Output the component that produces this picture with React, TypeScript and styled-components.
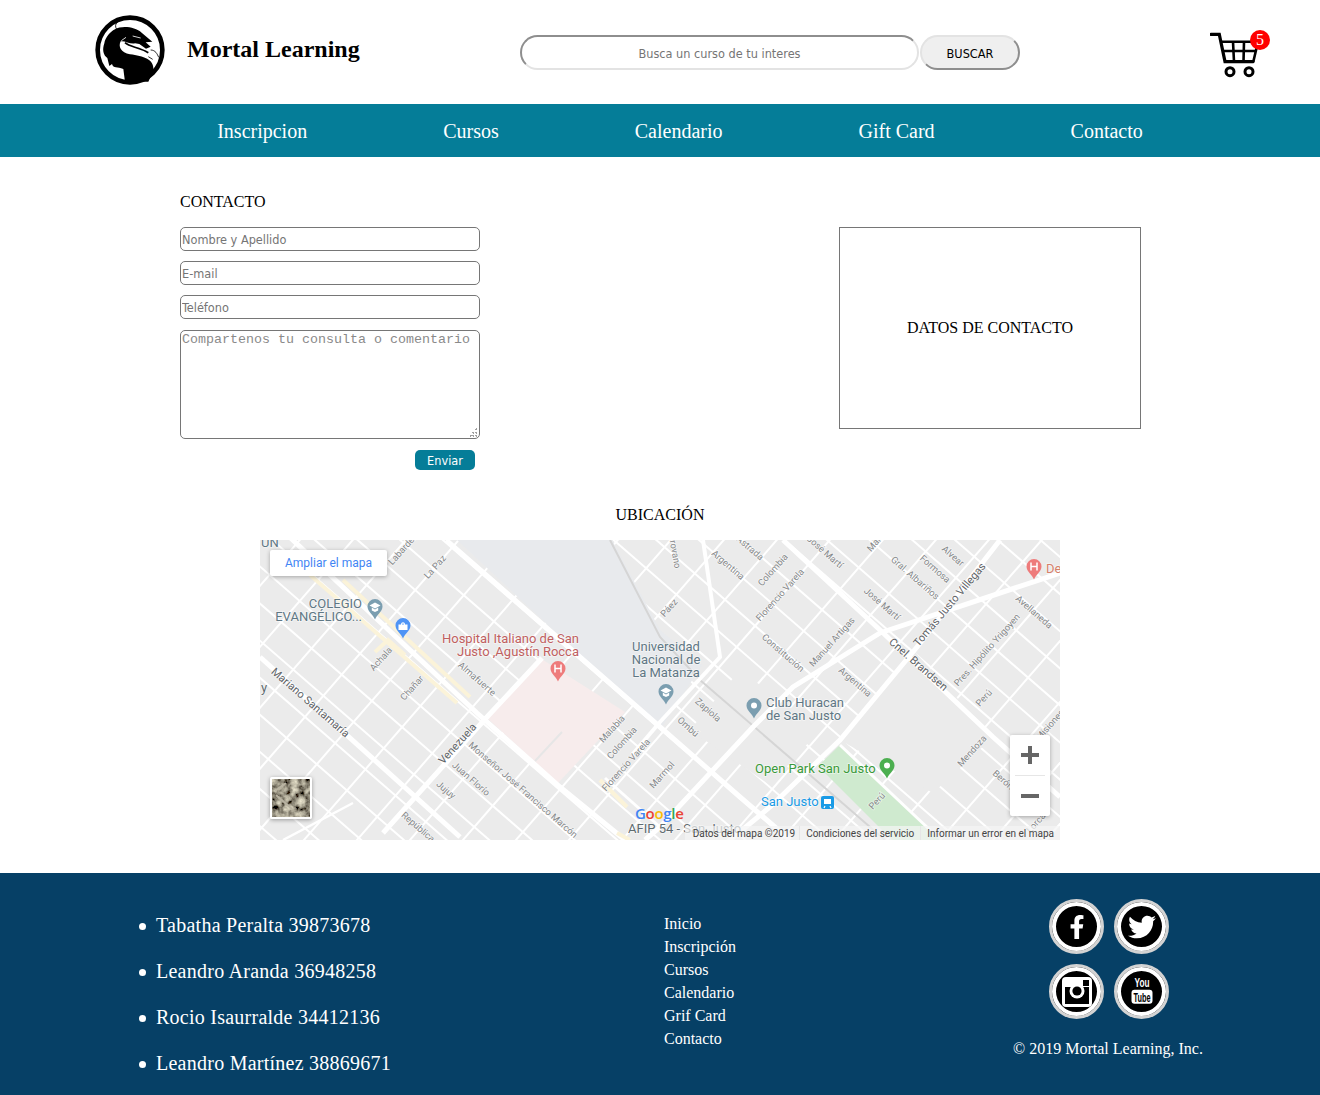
import React from "react";
import styled, { createGlobalStyle } from "styled-components";
import { FaFacebookF, FaTwitter } from "react-icons/fa";

const GlobalStyle = createGlobalStyle`
  html, body {
    margin: 0;
    padding: 0;
    background: #fff;
    font-family: "Liberation Serif", "Times New Roman", serif;
    color: #000;
  }
`;

const Header = styled.header`
  display: grid;
  grid-template-columns: 425px 500px 1fr;
  align-items: center;
  height: 104px;
  padding-left: 95px;
  box-sizing: border-box;
`;

const Brand = styled.div`
  display: flex;
  align-items: center;
  gap: 22px;
  padding-bottom: 4px;
`;

const BrandName = styled.h1`
  margin: 0;
  font-size: 24px;
  font-weight: bold;
  padding-bottom: 2px;
`;

const SearchForm = styled.form`
  display: flex;
  align-items: center;
  gap: 1px;
  margin-top: 1px;
`;

const SearchInput = styled.input`
  width: 399px;
  height: 35px;
  box-sizing: border-box;
  padding: 2px 1px 0;
  border: 2px solid #e3e3e3;
  border-color: #8e8e8e #e3e3e3 #e3e3e3 #8e8e8e;
  border-radius: 20px;
  background: #fff;
  text-align: center;
  outline: none;
  font-family: "DejaVu Sans", Tahoma, sans-serif;
  font-stretch: condensed;
  font-size: 12.6px;
  &::placeholder {
    color: #757575;
  }
`;

const SearchButton = styled.button`
  width: 100px;
  height: 35px;
  box-sizing: border-box;
  border: 2px solid #e3e3e3;
  border-color: #e3e3e3 #8e8e8e #8e8e8e #e3e3e3;
  border-radius: 20px;
  background: #efefef;
  color: #000;
  font-family: "DejaVu Sans", Tahoma, sans-serif;
  font-stretch: condensed;
  font-size: 12.6px;
  padding: 1px 0 0;
`;

const CartWrap = styled.div`
  position: relative;
  width: 60px;
  height: 50px;
  margin-left: 190px;
  margin-top: 6px;
`;

const CartBadge = styled.span`
  position: absolute;
  left: 40px;
  top: 0;
  width: 20px;
  height: 20px;
  border-radius: 50%;
  background: #fe0000;
  color: #fff;
  font-size: 16px;
  line-height: 20px;
  text-align: center;
`;

const Nav = styled.nav`
  display: flex;
  justify-content: center;
  align-items: center;
  gap: 136px;
  height: 53px;
  box-sizing: border-box;
  padding: 2px 0 0 40px;
  background: #057d98;
`;

const NavLink = styled.a`
  color: #fff;
  font-size: 20px;
`;

const Main = styled.main`
  padding-top: 36px;
`;

const ContactTitle = styled.h2`
  margin: 0 0 16px 180px;
  font-size: 16px;
  font-weight: normal;
  line-height: 18px;
`;

const ContactRow = styled.section`
  display: flex;
  justify-content: space-between;
  align-items: flex-start;
  padding: 0 179px 0 180px;
`;

const ContactForm = styled.form`
  display: flex;
  flex-direction: column;
  width: 300px;
`;

const Field = styled.input`
  height: 24px;
  margin-bottom: 10px;
  padding: 1px;
  box-sizing: border-box;
  border: 1px solid #767676;
  border-radius: 5px;
  outline: none;
  font-family: "DejaVu Sans", Tahoma, sans-serif;
  font-stretch: condensed;
  font-size: 12.6px;
  &::placeholder {
    color: #757575;
  }
`;

const Comment = styled.textarea`
  height: 109px;
  margin-top: 1px;
  padding: 1px;
  box-sizing: border-box;
  border: 1px solid #767676;
  border-radius: 5px;
  outline: none;
  font-family: "Liberation Mono", "Courier New", monospace;
  font-size: 13.33px;
  &::placeholder {
    color: #8a8a8a;
  }
  &::-webkit-resizer {
    background:
      radial-gradient(circle, #a0a0a0 1px, transparent 1px) 11px 11px / 3px 3px no-repeat,
      radial-gradient(circle, #a0a0a0 1px, transparent 1px) 8px 11px / 3px 3px no-repeat,
      radial-gradient(circle, #a0a0a0 1px, transparent 1px) 5px 11px / 3px 3px no-repeat,
      radial-gradient(circle, #a0a0a0 1px, transparent 1px) 11px 8px / 3px 3px no-repeat,
      radial-gradient(circle, #a0a0a0 1px, transparent 1px) 8px 8px / 3px 3px no-repeat,
      radial-gradient(circle, #a0a0a0 1px, transparent 1px) 11px 5px / 3px 3px no-repeat;
  }
`;

const SendButton = styled.button`
  align-self: flex-end;
  width: 60px;
  height: 20px;
  margin: 11px 5px 0 0;
  padding: 1px 0 0;
  border: none;
  border-radius: 5px;
  background: #057d98;
  color: #fff;
  font-family: "DejaVu Sans", Tahoma, sans-serif;
  font-stretch: condensed;
  font-size: 12.6px;
`;

const DataBox = styled.div`
  display: flex;
  align-items: center;
  justify-content: center;
  width: 302px;
  height: 202px;
  box-sizing: border-box;
  border: 1px solid #767676;
  font-size: 16px;
`;

const LocationSection = styled.section`
  display: flex;
  flex-direction: column;
  align-items: center;
  margin-top: 36px;
`;

const LocationTitle = styled.h2`
  margin: 0 0 16px;
  font-size: 16px;
  font-weight: normal;
  line-height: 18px;
`;

const MapFrame = styled.div`
  position: relative;
  width: 800px;
  height: 300px;
  overflow: hidden;
  background: #ebebeb;
`;

const MapSvg = styled.svg`
  display: block;
`;

const MapText = styled.text<{ $tone: string; $size: number; $anchor?: string }>`
  font-family: Roboto, "Liberation Sans", sans-serif;
  font-size: ${(p) => p.$size}px;
  fill: ${(p) => p.$tone};
  text-anchor: ${(p) => p.$anchor || "middle"};
  paint-order: stroke;
  stroke: rgba(255, 255, 255, 0.55);
  stroke-width: 1.5px;
`;

const EnlargeCard = styled.a`
  position: absolute;
  left: 10px;
  top: 10px;
  width: 117px;
  height: 26px;
  background: #fff;
  border-radius: 2px;
  box-shadow: 0 1px 4px rgba(0, 0, 0, 0.3);
  color: #4285f4;
  font-family: Roboto, "Liberation Sans", sans-serif;
  font-size: 12px;
  line-height: 26px;
  text-align: center;
`;

const ZoomControl = styled.div`
  position: absolute;
  right: 10px;
  bottom: 24px;
  display: flex;
  flex-direction: column;
  align-items: center;
  width: 40px;
  height: 81px;
  background: #fff;
  border-radius: 2px;
  box-shadow: 0 1px 4px rgba(0, 0, 0, 0.3);
`;

const ZoomButton = styled.div`
  display: flex;
  align-items: center;
  justify-content: center;
  width: 100%;
  height: 40px;
`;

const ZoomDivider = styled.div`
  width: 30px;
  height: 1px;
  background: #e6e6e6;
`;

const SatelliteThumb = styled.div`
  position: absolute;
  left: 10px;
  bottom: 21px;
  width: 42px;
  height: 42px;
  box-sizing: border-box;
  border: 2px solid #fff;
  border-radius: 2px;
  overflow: hidden;
  box-shadow: 0 1px 4px rgba(0, 0, 0, 0.35);
`;

const Attribution = styled.div`
  position: absolute;
  right: 0;
  bottom: 0;
  display: flex;
  height: 14px;
  padding-left: 2px;
  background: rgba(245, 245, 245, 0.7);
  color: #444;
  font-family: Roboto, "Liberation Sans", sans-serif;
  font-size: 10px;
  line-height: 15px;
`;

const AttributionItem = styled.span`
  padding: 0 6px;
  border-left: 1px solid #e6e6e6;
  &:first-child {
    border-left: none;
    padding-right: 4px;
  }
`;

const GoogleMark = styled.div`
  position: absolute;
  left: 375px;
  bottom: 18px;
  font-family: "Open Sans", "Liberation Sans", sans-serif;
  font-size: 15px;
  font-weight: 600;
  line-height: 18px;
  letter-spacing: -0.3px;
`;

const GoogleLetter = styled.span<{ $color: string }>`
  color: ${(p) => p.$color};
`;

const Footer = styled.footer`
  display: grid;
  grid-template-columns: 664px 340px 210px;
  height: 222px;
  margin-top: 33px;
  background: #064066;
  color: #fff;
`;

const PeopleList = styled.ul`
  margin: 0;
  padding: 41px 0 0 156px;
  list-style: none;
  font-size: 20px;
  line-height: 23px;
  letter-spacing: 0.25px;
`;

const Person = styled.li`
  position: relative;
  margin-bottom: 23px;
  &::before {
    content: "";
    position: absolute;
    left: -17px;
    top: 9px;
    width: 7px;
    height: 7px;
    border-radius: 50%;
    background: #fff;
  }
`;

const FooterLinks = styled.ul`
  margin: 0;
  padding: 39px 0 0;
  list-style: none;
  font-size: 16px;
  line-height: 23px;
`;

const SocialColumn = styled.div`
  display: flex;
  flex-direction: column;
  align-items: center;
  padding-top: 26px;
`;

const SocialGrid = styled.div`
  display: grid;
  grid-template-columns: 55px 55px;
  gap: 10px;
`;

const SocialBadge = styled.a`
  display: flex;
  align-items: center;
  justify-content: center;
  width: 55px;
  height: 55px;
  box-sizing: border-box;
  border: 3px solid #d3d3d3;
  border-radius: 50%;
  background: #000;
  box-shadow: inset 0 0 0 4px #fff;
  color: #fff;
  font-size: 24px;
`;

const Copyright = styled.p`
  margin: 21px 2px 0 0;
  font-size: 16px;
  line-height: 18px;
  white-space: nowrap;
`;

const SocialText = styled.text<{ $fill: string; $size: number }>`
  font-family: "Liberation Sans", sans-serif;
  font-weight: bold;
  font-size: ${(p) => p.$size}px;
  fill: ${(p) => p.$fill};
  text-anchor: middle;
`;

const DragonLogo = () => (
  <svg width="70" height="70" viewBox="45 45 210 210">
    <circle cx="150" cy="150" r="97" fill="#fff" stroke="#000" strokeWidth="14" />
    <path
      fill="#000"
      d="M105 88C125 76 165 80 185 98L217 125L197 127L212 140L198 146L178 132L165 130C150 133 135 122 122 124C114 140 122 158 150 163C190 168 224 178 220 212L205 245L135 245L130 207C112 198 100 207 96 192L88 198L82 174C70 166 66 150 73 130C76 112 90 96 105 88Z"
    />
    <path fill="none" stroke="#000" strokeWidth="2.5" d="M110 88C100 72 115 60 130 58M212 150C226 150 232 162 236 172M205 170L218 178" />
    <path fill="none" stroke="#000" strokeWidth="5" d="M135 128C150 142 175 140 205 158" />
    <path fill="none" stroke="#fff" strokeWidth="2.5" d="M158 108L182 114M124 122L138 112" />
  </svg>
);

const CartIcon = () => (
  <svg width="50" height="50" viewBox="0 0 50 50">
    <g fill="none" stroke="#000" strokeWidth="2.6">
      <path strokeWidth="3.2" strokeLinecap="round" d="M1 4.3H9.3L15 31.7H43" />
      <path d="M11 11.7H48L43.3 31.7M12.8 21H46M23 11.7L24 31.7M34 11.7L33.5 31.7" />
      <circle cx="20" cy="41.7" r="4" strokeWidth="3" />
      <circle cx="39" cy="41.7" r="4" strokeWidth="3" />
    </g>
  </svg>
);

const PinShape = ({ x, y, color, glyph }: { x: number; y: number; color: string; glyph?: string }) => (
  <g transform={`translate(${x} ${y + 1.5})`}>
    <path fill={color} d="M0 10C-2 5-7.5 2-7.5-3A7.5 7.5 0 0 1 7.5-3C7.5 2 2 5 0 10Z" />
    {glyph === "dot" && <circle cy="-3" r="3" fill="#fff" />}
    {glyph === "school" && <path fill="#fff" d="M0-7L5.5-4L0-1L-5.5-4ZM-3.2-2L0 0L3.2-2V1L0 2.6L-3.2 1Z" />}
    {glyph === "bag" && <path fill="#fff" d="M-4.5-4H-2C-2-7 2-7 2-4H4.5V1.5H-4.5ZM-1-4H1C1-5.5-1-5.5-1-4Z" />}
    {glyph === "H" && <path stroke="#fff" strokeWidth="1.5" fill="none" d="M-3-7V1M3-7V1M-3-3H3" />}
  </g>
);

const roads: { d: string; w: number }[] = [
  { d: "M186 0L400 187L480 257L530 300", w: 5 },
  { d: "M20 -12L217 173L300 247L365 300", w: 5 },
  { d: "M0 117L200 297", w: 5 },
  { d: "M123 293L227 177L282 118", w: 5 },
  { d: "M23 300L93 263", w: 2.5 },
  { d: "M523 0L620 90L733 197L800 257", w: 5 },
  { d: "M740 0L657 107L580 200L510 267L470 300", w: 5 },
  { d: "M800 33L620 93L533 147L493 187L400 287L385 300", w: 5 },
  { d: "M443 0L460 117L400 182L372 215", w: 4 },
  { d: "M580 205L670 290", w: 3 },
  { d: "M400 287L345 238", w: 3 },
];

const sandRoads = [
  "M50 35L197 163",
  "M83 40L210 157",
  "M340 240L367 267",
  "M357 293L370 300",
  "M115 112L128 100L145 115",
];

const streetLabels: { t: string; x: number; y: number; r: number; big?: boolean }[] = [
  { t: "Labardén", x: 143, y: 9, r: -48 },
  { t: "La Paz", x: 175, y: 27, r: -48 },
  { t: "Achala", x: 121, y: 119, r: -48 },
  { t: "Chañar", x: 152, y: 148, r: -48 },
  { t: "Almafuerte", x: 217, y: 139, r: 41 },
  { t: "Mariano Santamaría", x: 50, y: 163, r: 41, big: true },
  { t: "Venezuela", x: 198, y: 204, r: -48, big: true },
  { t: "Monseñor José Francisco Marcón", x: 263, y: 250, r: 41 },
  { t: "Juan Florío", x: 211, y: 239, r: 41 },
  { t: "Jujuy", x: 186, y: 250, r: 41 },
  { t: "República", x: 158, y: 287, r: 41 },
  { t: "Malabia", x: 352, y: 189, r: -48 },
  { t: "Colombia", x: 362, y: 203, r: -48 },
  { t: "Florencio Varela", x: 366, y: 225, r: -48 },
  { t: "Marmol", x: 402, y: 235, r: -48 },
  { t: "Páez", x: 409, y: 68, r: -48 },
  { t: "Irovano", x: 415, y: 13, r: 80 },
  { t: "Argentina", x: 468, y: 25, r: 41 },
  { t: "Astrada", x: 490, y: 8, r: 41 },
  { t: "Colombia", x: 513, y: 30, r: -48 },
  { t: "Florencio Varela", x: 520, y: 55, r: -48 },
  { t: "José Martí", x: 565, y: 12, r: 41 },
  { t: "Martí", x: 616, y: 2, r: -48 },
  { t: "Gral. Albariños", x: 655, y: 38, r: 41 },
  { t: "Formosa", x: 675, y: 29, r: 41 },
  { t: "Alvear", x: 693, y: 16, r: 41 },
  { t: "José Martí", x: 622, y: 64, r: 41 },
  { t: "Manuel Artigas", x: 572, y: 102, r: -48 },
  { t: "Constitución", x: 523, y: 113, r: 41 },
  { t: "Argentina", x: 595, y: 142, r: 41 },
  { t: "Tomás Justo Villegas", x: 690, y: 65, r: -50, big: true },
  { t: "Cnel. Brandsen", x: 658, y: 125, r: 41, big: true },
  { t: "Pres. Hipólito Yrigoyen", x: 727, y: 110, r: -48 },
  { t: "Avellaneda", x: 774, y: 72, r: 41 },
  { t: "Perú", x: 724, y: 158, r: -48 },
  { t: "Mendoza", x: 712, y: 211, r: -48 },
  { t: "Berón", x: 743, y: 240, r: 41 },
  { t: "Perú", x: 617, y: 261, r: -48 },
  { t: "Zapiola", x: 448, y: 170, r: 41 },
  { t: "Ombú", x: 428, y: 187, r: 41 },
  { t: "Misiones", x: 790, y: 185, r: -48 },
  { t: "Lorca", x: 776, y: 283, r: -48 },
];

const poiLabels: { t: string; x: number; y: number; tone: string; anchor?: string }[] = [
  { t: "UN", x: 1, y: 7, tone: "#5f7784", anchor: "start" },
  { t: "y", x: 1, y: 152, tone: "#5f6b70", anchor: "start" },
  { t: "COLEGIO", x: 102, y: 68, tone: "#5f7784", anchor: "end" },
  { t: "EVANGÉLICO...", x: 102, y: 81, tone: "#5f7784", anchor: "end" },
  { t: "Hospital Italiano de San", x: 319, y: 103, tone: "#c0605f", anchor: "end" },
  { t: "Justo ,Agustín Rocca", x: 319, y: 116, tone: "#c0605f", anchor: "end" },
  { t: "Universidad", x: 406, y: 111, tone: "#5f7784" },
  { t: "Nacional de", x: 406, y: 124, tone: "#5f7784" },
  { t: "La Matanza", x: 406, y: 137, tone: "#5f7784" },
  { t: "Club Huracan", x: 506, y: 167, tone: "#5f7784", anchor: "start" },
  { t: "de San Justo", x: 506, y: 180, tone: "#5f7784", anchor: "start" },
  { t: "Open Park San Justo", x: 495, y: 233, tone: "#3a9a3a", anchor: "start" },
  { t: "San Justo", x: 501, y: 266, tone: "#1a9be6", anchor: "start" },
  { t: "AFIP 54 - San Justo", x: 368, y: 293, tone: "#5f6b70", anchor: "start" },
  { t: "De", x: 786, y: 33, tone: "#d6806a", anchor: "start" },
];

const STREET_ROWS = Array.from({ length: 29 }, (_, i) => -540 + i * 28);
const STREET_COLS = Array.from({ length: 24 }, (_, i) => -50 + i * 40);

const StreetMap = () => (
  <MapSvg width="800" height="300" viewBox="0 0 800 300">
    <rect width="800" height="300" fill="#ebebeb" />
    <g transform="rotate(41)" stroke="#fff" strokeWidth="2">
      {STREET_ROWS.map((v) => (
        <line key={v} x1="-60" x2="870" y1={v} y2={v} />
      ))}
      {STREET_COLS.map((u) => (
        <line key={u} y1="-560" y2="260" x1={u} x2={u} />
      ))}
    </g>
    <path fill="#e8eaed" d="M197 0H352L400 90L442 125L400 190Z" />
    <path fill="#ebebeb" d="M653 110L733 197L673 253L580 200Z" />
    <path fill="#ebebeb" d="M480 130L560 190L510 245L430 190Z" />
    <path fill="#f7ecec" d="M227 178L280 118L365 172L298 243Z" />
    <path fill="none" stroke="#e6e6e6" strokeWidth="2" d="M275 221L302 192" />
    <path fill="#cfeacf" d="M580 205L672 292L680 300H632L558 226Z" />
    <path fill="none" stroke="#d5d5d5" strokeWidth="2" d="M350 0L400 97L440 140L587 267L625 300" />
    {roads.map((r) => (
      <path key={r.d} d={r.d} fill="none" stroke="#fff" strokeWidth={r.w} />
    ))}
    {sandRoads.map((d) => (
      <path key={d} d={d} fill="none" stroke="#fbf3d9" strokeWidth="4" />
    ))}
    {streetLabels.map((l) => (
      <MapText
        key={l.t + l.x}
        $tone={l.big ? "#5f6468" : "#85888a"}
        $size={l.big ? 11 : 9.3}
        transform={`translate(${l.x} ${l.y}) rotate(${l.r})`}
        dy="3"
      >
        {l.t}
      </MapText>
    ))}
    {poiLabels.map((l) => (
      <MapText key={l.t} $tone={l.tone} $size={13} $anchor={l.anchor} x={l.x} y={l.y}>
        {l.t}
      </MapText>
    ))}
    <PinShape x={115} y={68} color="#7b9eb0" glyph="school" />
    <PinShape x={143} y={87} color="#4f94f5" glyph="bag" />
    <PinShape x={298} y={130} color="#ee7b7b" glyph="H" />
    <PinShape x={406} y={153} color="#7b9eb0" glyph="school" />
    <PinShape x={494} y={167} color="#7b9eb0" glyph="dot" />
    <PinShape x={627} y={227} color="#4caf50" glyph="dot" />
    <PinShape x={774} y={28} color="#ee7b7b" glyph="H" />
    <rect x="561" y="256" width="13" height="13" rx="2" fill="#1a9be6" />
    <rect x="564" y="259" width="7" height="5" fill="#fff" />
    <path stroke="#fff" strokeWidth="1.2" d="M565 266L564 268M570 266L571 268" />
  </MapSvg>
);

const AerialPatch = () => (
  <svg width="38" height="38" viewBox="0 0 38 38">
    <filter id="aerial">
      <feTurbulence type="fractalNoise" baseFrequency="0.15" numOctaves="3" seed="4" />
      <feColorMatrix values="1.3 0 0 0 -0.3  1.25 0 0 0 -0.3  1 0 0 0 -0.25  0 0 0 0 1" />
    </filter>
    <rect width="38" height="38" filter="url(#aerial)" />
    <path stroke="#b9b3a2" strokeWidth="2" fill="none" d="M3 12L14 4M4 16L20 30" />
  </svg>
);

const InstagramGlyph = () => (
  <svg width="30" height="30" viewBox="0 0 30 30">
    <rect x="0" y="0" width="30" height="30" rx="4" fill="#fff" />
    <rect x="3" y="10" width="24" height="17" fill="#000" />
    <path fill="#fff" d="M3 10H9.5A7.5 7.5 0 0 0 20.5 10H27V6H3Z" />
    <circle cx="15" cy="14" r="7.5" fill="#fff" />
    <circle cx="15" cy="14" r="4.6" fill="#000" />
    <rect x="21" y="3" width="6" height="6" fill="#000" />
  </svg>
);

const YoutubeGlyph = () => (
  <svg width="30" height="34" viewBox="0 0 30 34">
    <SocialText $fill="#fff" $size={13} x="15" y="12" textLength="15" lengthAdjust="spacingAndGlyphs">You</SocialText>
    <rect x="4.5" y="14.7" width="21" height="14" rx="3" fill="#fff" />
    <SocialText $fill="#000" $size={13} x="15" y="26.5" textLength="17" lengthAdjust="spacingAndGlyphs">Tube</SocialText>
  </svg>
);

const App = () => {
  const navItems = ["Inscripcion", "Cursos", "Calendario", "Gift Card", "Contacto"];
  const people = [
    "Tabatha Peralta 39873678",
    "Leandro Aranda 36948258",
    "Rocio Isaurralde 34412136",
    "Leandro Martínez 38869671",
  ];
  const links = ["Inicio", "Inscripción", "Cursos", "Calendario", "Grif Card", "Contacto"];
  const googleLetters: [string, string][] = [
    ["G", "#4285f4"],
    ["o", "#ea4335"],
    ["o", "#fbbc05"],
    ["g", "#4285f4"],
    ["l", "#34a853"],
    ["e", "#ea4335"],
  ];

  return (
    <>
      <GlobalStyle />
      <Header>
        <Brand>
          <DragonLogo />
          <BrandName>Mortal Learning</BrandName>
        </Brand>
        <SearchForm>
          <SearchInput placeholder="Busca un curso de tu interes" />
          <SearchButton type="button">BUSCAR</SearchButton>
        </SearchForm>
        <CartWrap>
          <CartIcon />
          <CartBadge>5</CartBadge>
        </CartWrap>
      </Header>
      <Nav>
        {navItems.map((item) => (
          <NavLink key={item}>{item}</NavLink>
        ))}
      </Nav>
      <Main>
        <ContactTitle>CONTACTO</ContactTitle>
        <ContactRow>
          <ContactForm>
            <Field placeholder="Nombre y Apellido" />
            <Field placeholder="E-mail" />
            <Field placeholder="Teléfono" />
            <Comment placeholder="Compartenos tu consulta o comentario" />
            <SendButton type="button">Enviar</SendButton>
          </ContactForm>
          <DataBox>DATOS DE CONTACTO</DataBox>
        </ContactRow>
        <LocationSection>
          <LocationTitle>UBICACIÓN</LocationTitle>
          <MapFrame>
            <StreetMap />
            <EnlargeCard>Ampliar el mapa</EnlargeCard>
            <GoogleMark>
              {googleLetters.map(([letter, color], i) => (
                <GoogleLetter key={i} $color={color}>{letter}</GoogleLetter>
              ))}
            </GoogleMark>
            <SatelliteThumb>
              <AerialPatch />
            </SatelliteThumb>
            <ZoomControl>
              <ZoomButton>
                <svg width="18" height="18" viewBox="0 0 18 18">
                  <path fill="#666" d="M7 0H11V7H18V11H11V18H7V11H0V7H7Z" />
                </svg>
              </ZoomButton>
              <ZoomDivider />
              <ZoomButton>
                <svg width="18" height="18" viewBox="0 0 18 18">
                  <path fill="#666" d="M0 7H18V11H0Z" />
                </svg>
              </ZoomButton>
            </ZoomControl>
            <Attribution>
              <AttributionItem>Datos del mapa ©2019</AttributionItem>
              <AttributionItem>Condiciones del servicio</AttributionItem>
              <AttributionItem>Informar un error en el mapa</AttributionItem>
            </Attribution>
          </MapFrame>
        </LocationSection>
      </Main>
      <Footer>
        <PeopleList>
          {people.map((person) => (
            <Person key={person}>{person}</Person>
          ))}
        </PeopleList>
        <FooterLinks>
          {links.map((link) => (
            <li key={link}>{link}</li>
          ))}
        </FooterLinks>
        <SocialColumn>
          <SocialGrid>
            <SocialBadge><FaFacebookF /></SocialBadge>
            <SocialBadge><FaTwitter size={28} /></SocialBadge>
            <SocialBadge><InstagramGlyph /></SocialBadge>
            <SocialBadge><YoutubeGlyph /></SocialBadge>
          </SocialGrid>
          <Copyright>© 2019 Mortal Learning, Inc.</Copyright>
        </SocialColumn>
      </Footer>
    </>
  );
};

export default App;
